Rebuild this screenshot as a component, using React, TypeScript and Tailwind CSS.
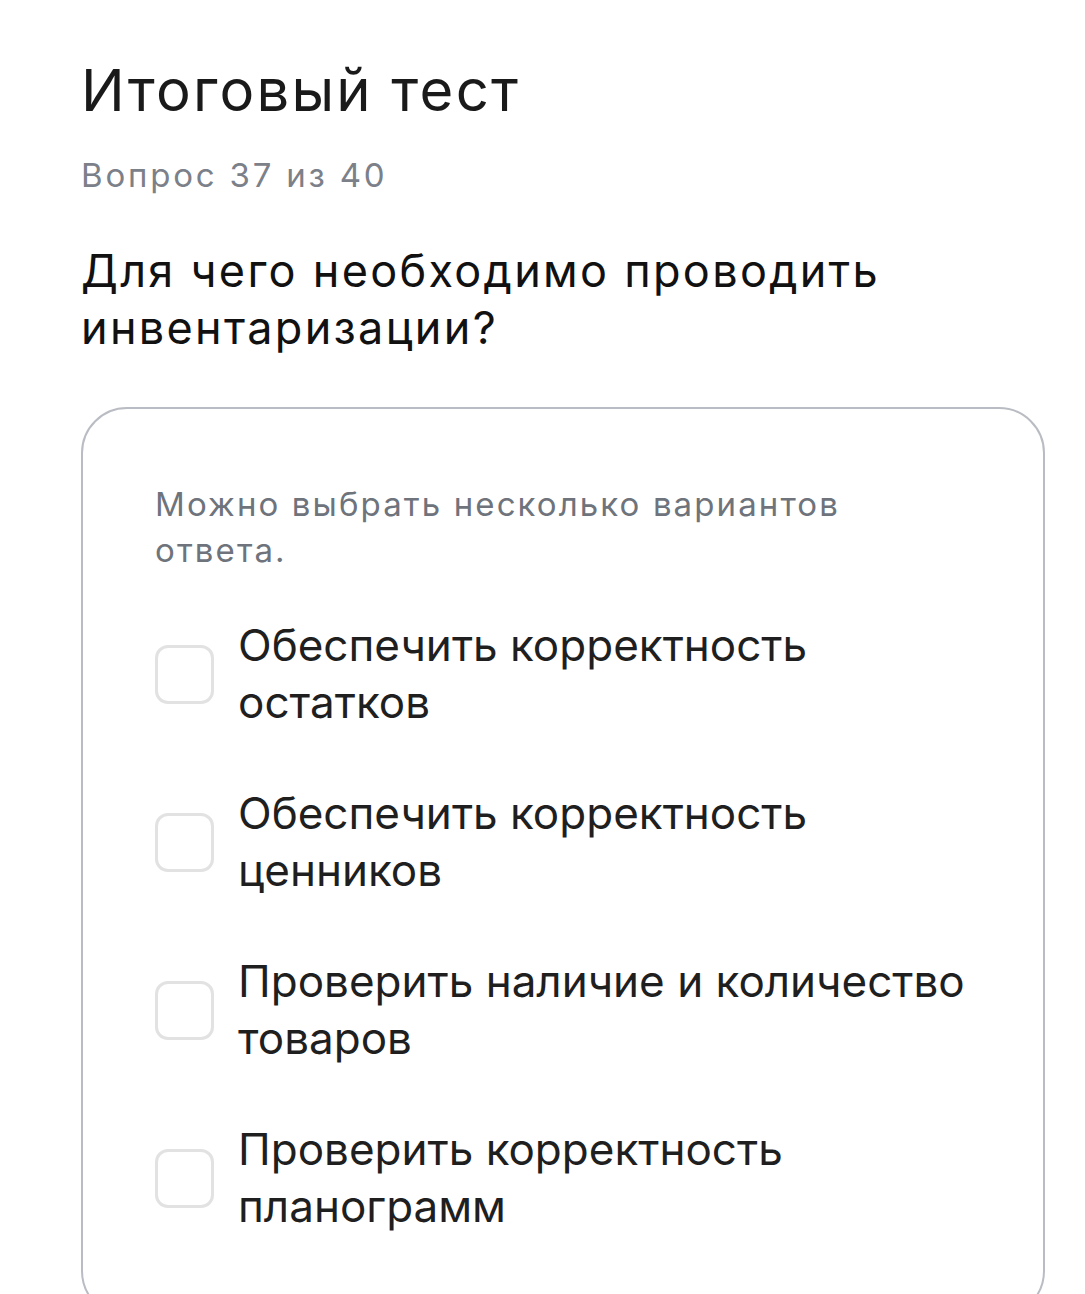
import React from "react";

const options = [
  ["Обеспечить корректность", "остатков"],
  ["Обеспечить корректность", "ценников"],
  ["Проверить наличие и количество", "товаров"],
  ["Проверить корректность", "планограмм"],
];

export default function App() {
  return (
    <div
      className="w-[1085px] h-[1294px] overflow-hidden bg-white text-[#1c1c1c]"
      style={{ fontFamily: "Inter, 'Noto Sans', sans-serif" }}
    >
      <div className="pl-[81px] pt-[52px]">
        <h1 className="text-[58px] leading-[76px] font-normal tracking-[2.2px] text-[#1a1a1a]">Итоговый тест</h1>
        <div className="mt-[27px] text-[33px] leading-[40px] tracking-[2.8px] text-[#7b8089]">Вопрос 37 из 40</div>
        <div className="mt-[47px] text-[45px] leading-[57px] font-normal tracking-[2.3px] text-[#111111] w-[920px]">
          Для чего необходимо проводить инвентаризации?
        </div>
        <div className="mt-[51px] w-[964px] rounded-[46px] border-[2.5px] border-[#b9bcc2] pl-[72px] pr-[30px] pt-[72px] pb-[80px]">
          <div className="text-[33px] leading-[46px] tracking-[2.1px] text-[#6e737c] w-[760px]">
            Можно выбрать несколько вариантов ответа.
          </div>
          <div className="mt-[44px] flex flex-col gap-[54px]">
            {options.map((o, i) => (
              <div key={i} className="flex items-center gap-[24px]">
                <div className="w-[59px] h-[59px] shrink-0 rounded-[13px] border-[3px] border-[#e2e2e2]" />
                <div className="text-[44px] leading-[57px] text-[#1f1f1f]">
                  <div>{o[0]}</div>
                  <div>{o[1]}</div>
                </div>
              </div>
            ))}
          </div>
        </div>
      </div>
    </div>
  );
}
